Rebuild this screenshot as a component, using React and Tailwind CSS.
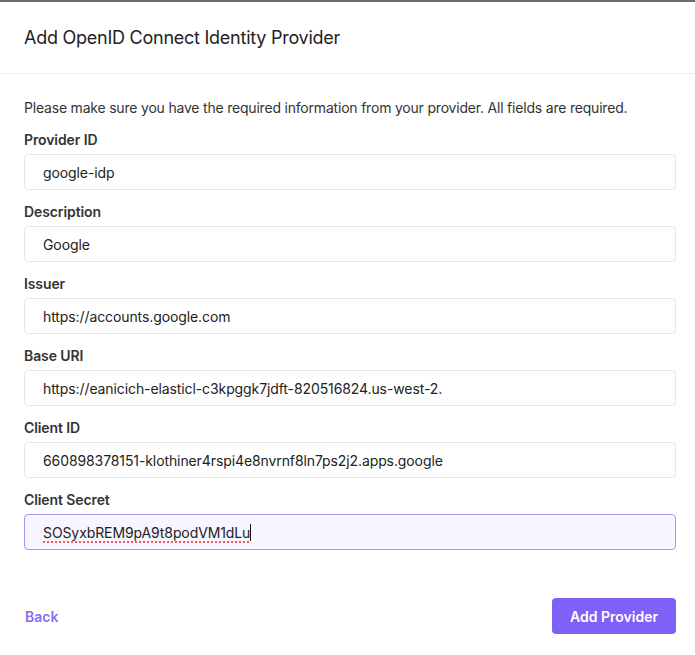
import React from "react";

const fields = [
  ["Provider ID", "google-idp"],
  ["Description", "Google"],
  ["Issuer", "https://accounts.google.com"],
  ["Base URI", "https://eanicich-elasticl-c3kpggk7jdft-820516824.us-west-2."],
  ["Client ID", "660898378151-klothiner4rspi4e8nvrnf8ln7ps2j2.apps.google"],
];

export default function App() {
  return (
    <div className="w-[695px] h-[655px] bg-white border-t-2 border-[#6e6e6e] text-[#1f2328]" style={{ fontFamily: "Inter, 'Noto Sans', sans-serif" }}>
      <div className="h-[72px] border-b border-[#ececec] flex items-center px-6">
        <h1 className="text-[18px] text-[#222] tracking-[-0.25px]">Add OpenID Connect Identity Provider</h1>
      </div>
      <div className="pl-6 pr-[19px] pt-[24px]">
        <p className="text-[14px] leading-[20px] text-[#333] tracking-[-0.2px]">Please make sure you have the required information from your provider. All fields are required.</p>
        <div className="flex flex-col gap-[12px] mt-[12px]">
          {fields.map(([label, value]) => (
            <div key={label} className="flex flex-col">
              <label className="text-[14px] font-semibold leading-[20px] text-[#333] mb-[4px] tracking-[-0.1px]">{label}</label>
              <div className="h-[36px] border border-[#e6e6e6] rounded-[4px] flex items-center px-[18px] text-[14px] text-[#222] tracking-[-0.1px]">{value}</div>
            </div>
          ))}
          <div className="flex flex-col">
            <label className="text-[14px] font-semibold leading-[20px] text-[#333] mb-[4px] tracking-[-0.1px]">Client Secret</label>
            <div className="h-[36px] border border-[#a996f7] bg-[#f7f5ff] rounded-[4px] flex items-center px-[18px] text-[14px] text-[#222] tracking-[-0.1px]">
              <span className="underline decoration-dotted decoration-[#f05a5a] decoration-[2px] underline-offset-[4px]">SOSyxbREM9pA9t8podVM1dLu</span>
              <span className="w-px h-[17px] bg-[#111]" />
            </div>
          </div>
        </div>
        <div className="flex items-center justify-between mt-[48px]">
          <span className="text-[14px] font-semibold text-[#8b6cf6] pl-[1px]">Back</span>
          <button className="h-[36px] w-[124px] rounded-[4px] bg-[#8061f7] text-white text-[14px] font-semibold">Add Provider</button>
        </div>
      </div>
    </div>
  );
}
